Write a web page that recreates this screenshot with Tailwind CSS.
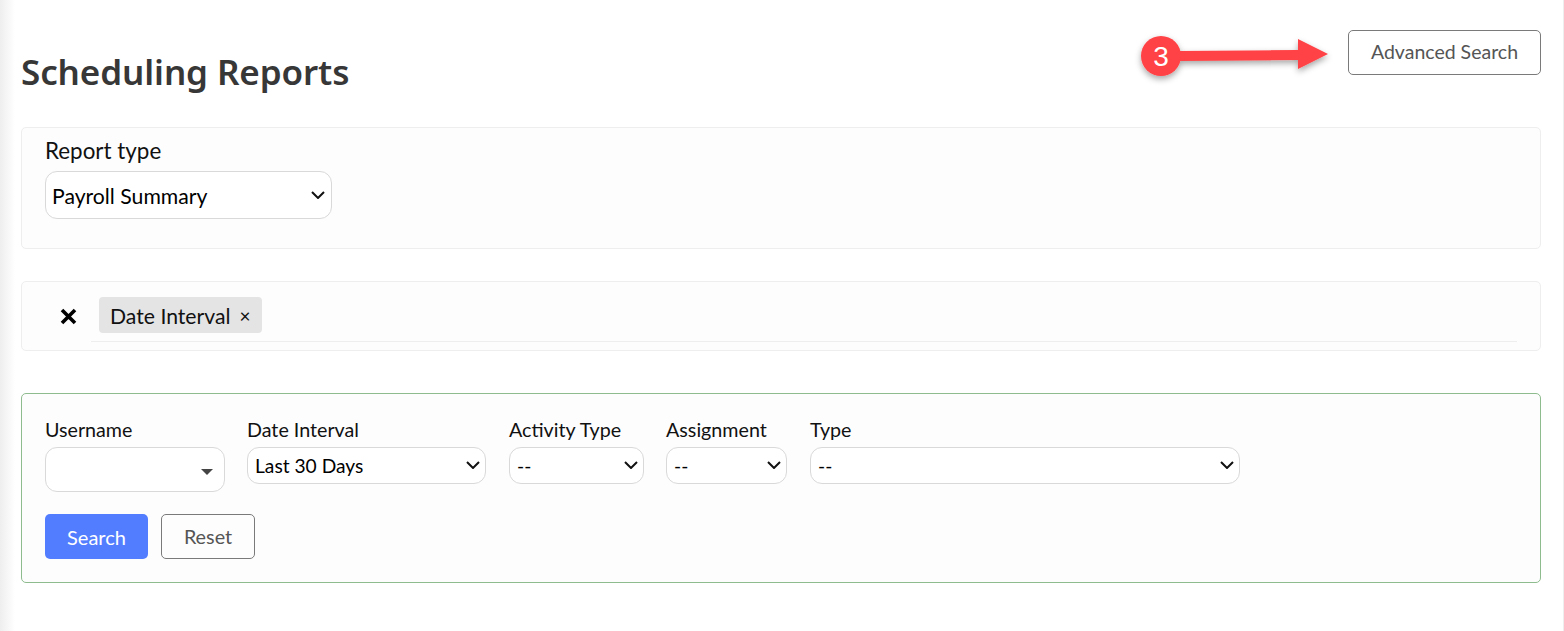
<!DOCTYPE html>
<html lang="en">
<head>
    <meta charset="UTF-8">
    <meta name="viewport" content="width=device-width, initial-scale=1.0">
    <title>Scheduling Reports</title>
    <script src="https://cdn.jsdelivr.net/npm/@tailwindcss/browser@4"></script>
</head>
<body class="bg-white text-black font-['Lato','Liberation_Sans',sans-serif] overflow-hidden">
    <div class="relative h-[631px] w-[1564px] pl-[21px] pr-[22px] border-r border-[#eeeeee]">
        <!-- left page shadow -->
        <div class="absolute left-0 top-0 h-full w-[15px] bg-gradient-to-r from-[#eeeeee] to-white"></div>

        <div class="relative">
            <div class="flex justify-between items-start h-[127px] pt-[30px]">
                <h1 class="mt-[19px] text-[35px] leading-[46px] tracking-[-0.1px] font-semibold text-[#373737] font-['Noto_Sans',sans-serif]">Scheduling Reports</h1>
                <button class="w-[193px] h-[45px] pb-[2px] border border-[#7a7a7a] rounded-[5px] text-[19.5px] text-[#555555]">Advanced Search</button>
            </div>

            <div class="h-[122px] border border-[#eeeeee] rounded-[5px] bg-[#fdfdfd] pl-[23px] pt-[8px]">
                <label class="block text-[22.4px] leading-[30px] text-[#111111]">Report type</label>
                <div class="relative mt-[5px] w-[287px]">
                    <select class="appearance-none block w-full h-[48px] pl-[6px] pt-[3px] border border-[#d9d9d9] rounded-[12px] text-[21.2px] bg-white">
                        <option>Payroll Summary</option>
                    </select>
                    <svg class="absolute right-[7px] top-[20px] w-[14px] h-[8px]" viewBox="0 0 14 8"><path d="M1 1 L7 7 L13 1" stroke="#111" stroke-width="2" fill="none"/></svg>
                </div>
            </div>

            <div class="mt-[32px] h-[70px] border border-[#eeeeee] rounded-[5px] bg-[#fdfdfd] flex pl-[38px] pr-[23px]">
                <svg class="mt-[26px] w-[17px] h-[17px] shrink-0" viewBox="0 0 17 17">
                    <path d="M2 2 L15 15 M15 2 L2 15" stroke="#000" stroke-width="3.6" fill="none"/>
                </svg>
                <div class="ml-[14px] flex-1 h-[60px] border-b border-[#eeeeee] pl-[8px] pt-[15px]">
                    <span class="inline-flex items-center h-[36px] pl-[11px] pr-[11px] pt-[4px] bg-[#e4e4e4] rounded-[4px] text-[21.2px] text-[#111111]">
                        Date Interval
                        <span class="ml-[9px] mb-[4px] text-[19px] leading-none">×</span>
                    </span>
                </div>
            </div>

            <div class="mt-[42px] h-[190px] border border-[#8fbc8f] rounded-[5px] bg-[#fdfdfd] pl-[23px] pt-[22px]">
                <div class="flex items-start h-[98px]">
                    <div class="w-[180px] mr-[22px]">
                        <label class="block text-[19.7px] leading-[28px] text-[#111111]">Username</label>
                        <div class="mt-[3px] h-[45px] border border-[#d9d9d9] rounded-[12px] bg-white flex items-center justify-end pr-[11px]">
                            <span class="mt-[4px] w-0 h-0 border-x-[6px] border-x-transparent border-t-[6px] border-t-[#444444]"></span>
                        </div>
                    </div>
                    <div class="w-[239px] mr-[23px]">
                        <label class="block text-[19.7px] leading-[28px] text-[#111111]">Date Interval</label>
                        <div class="relative mt-[3px]">
                            <select class="appearance-none block w-full h-[37px] pl-[7px] pt-[2px] border border-[#d9d9d9] rounded-[12px] text-[19.2px] bg-white">
                                <option>Last 30 Days</option>
                            </select>
                            <svg class="absolute right-[6px] top-[14px] w-[14px] h-[8px]" viewBox="0 0 14 8"><path d="M1 1 L7 7 L13 1" stroke="#111" stroke-width="2" fill="none"/></svg>
                        </div>
                    </div>
                    <div class="w-[135px] mr-[22px]">
                        <label class="block text-[19.7px] leading-[28px] text-[#111111]">Activity Type</label>
                        <div class="relative mt-[3px]">
                            <select class="appearance-none block w-full h-[37px] pl-[7px] pt-[2px] border border-[#d9d9d9] rounded-[12px] text-[19.2px] bg-white">
                                <option>--</option>
                            </select>
                            <svg class="absolute right-[6px] top-[14px] w-[14px] h-[8px]" viewBox="0 0 14 8"><path d="M1 1 L7 7 L13 1" stroke="#111" stroke-width="2" fill="none"/></svg>
                        </div>
                    </div>
                    <div class="w-[121px] mr-[23px]">
                        <label class="block text-[19.7px] leading-[28px] text-[#111111]">Assignment</label>
                        <div class="relative mt-[3px]">
                            <select class="appearance-none block w-full h-[37px] pl-[7px] pt-[2px] border border-[#d9d9d9] rounded-[12px] text-[19.2px] bg-white">
                                <option>--</option>
                            </select>
                            <svg class="absolute right-[6px] top-[14px] w-[14px] h-[8px]" viewBox="0 0 14 8"><path d="M1 1 L7 7 L13 1" stroke="#111" stroke-width="2" fill="none"/></svg>
                        </div>
                    </div>
                    <div class="w-[430px]">
                        <label class="block text-[19.7px] leading-[28px] text-[#111111]">Type</label>
                        <div class="relative mt-[3px]">
                            <select class="appearance-none block w-full h-[37px] pl-[7px] pt-[2px] border border-[#d9d9d9] rounded-[12px] text-[19.2px] bg-white">
                                <option>--</option>
                            </select>
                            <svg class="absolute right-[6px] top-[14px] w-[14px] h-[8px]" viewBox="0 0 14 8"><path d="M1 1 L7 7 L13 1" stroke="#111" stroke-width="2" fill="none"/></svg>
                        </div>
                    </div>
                </div>
                <div class="flex gap-[13px]">
                    <button class="w-[103px] h-[45px] pt-[1px] bg-[#527dff] rounded-[5px] text-[20px] text-white">Search</button>
                    <button class="w-[94px] h-[45px] pt-[1px] border border-[#7a7a7a] rounded-[5px] text-[19.8px] text-[#555555]">Reset</button>
                </div>
            </div>
        </div>

        <!-- red annotation -->
        <svg class="absolute left-[1130px] top-[25px] overflow-visible" width="210" height="70" viewBox="0 0 210 70">
            <defs>
                <filter id="annShadow" x="-20%" y="-50%" width="140%" height="220%">
                    <feDropShadow dx="0" dy="3" stdDeviation="3" flood-color="#000" flood-opacity="0.35"/>
                </filter>
            </defs>
            <g filter="url(#annShadow)" fill="#ff4245">
                <path d="M50 26 L168 25 L168 14 L198 29 L168 44 L168 35 L50 36 Z"/>
                <circle cx="31" cy="31" r="20"/>
            </g>
            <text x="31" y="41" text-anchor="middle" fill="#fff" font-size="28" font-family="Liberation Sans, sans-serif">3</text>
        </svg>
    </div>
</body>
</html>
